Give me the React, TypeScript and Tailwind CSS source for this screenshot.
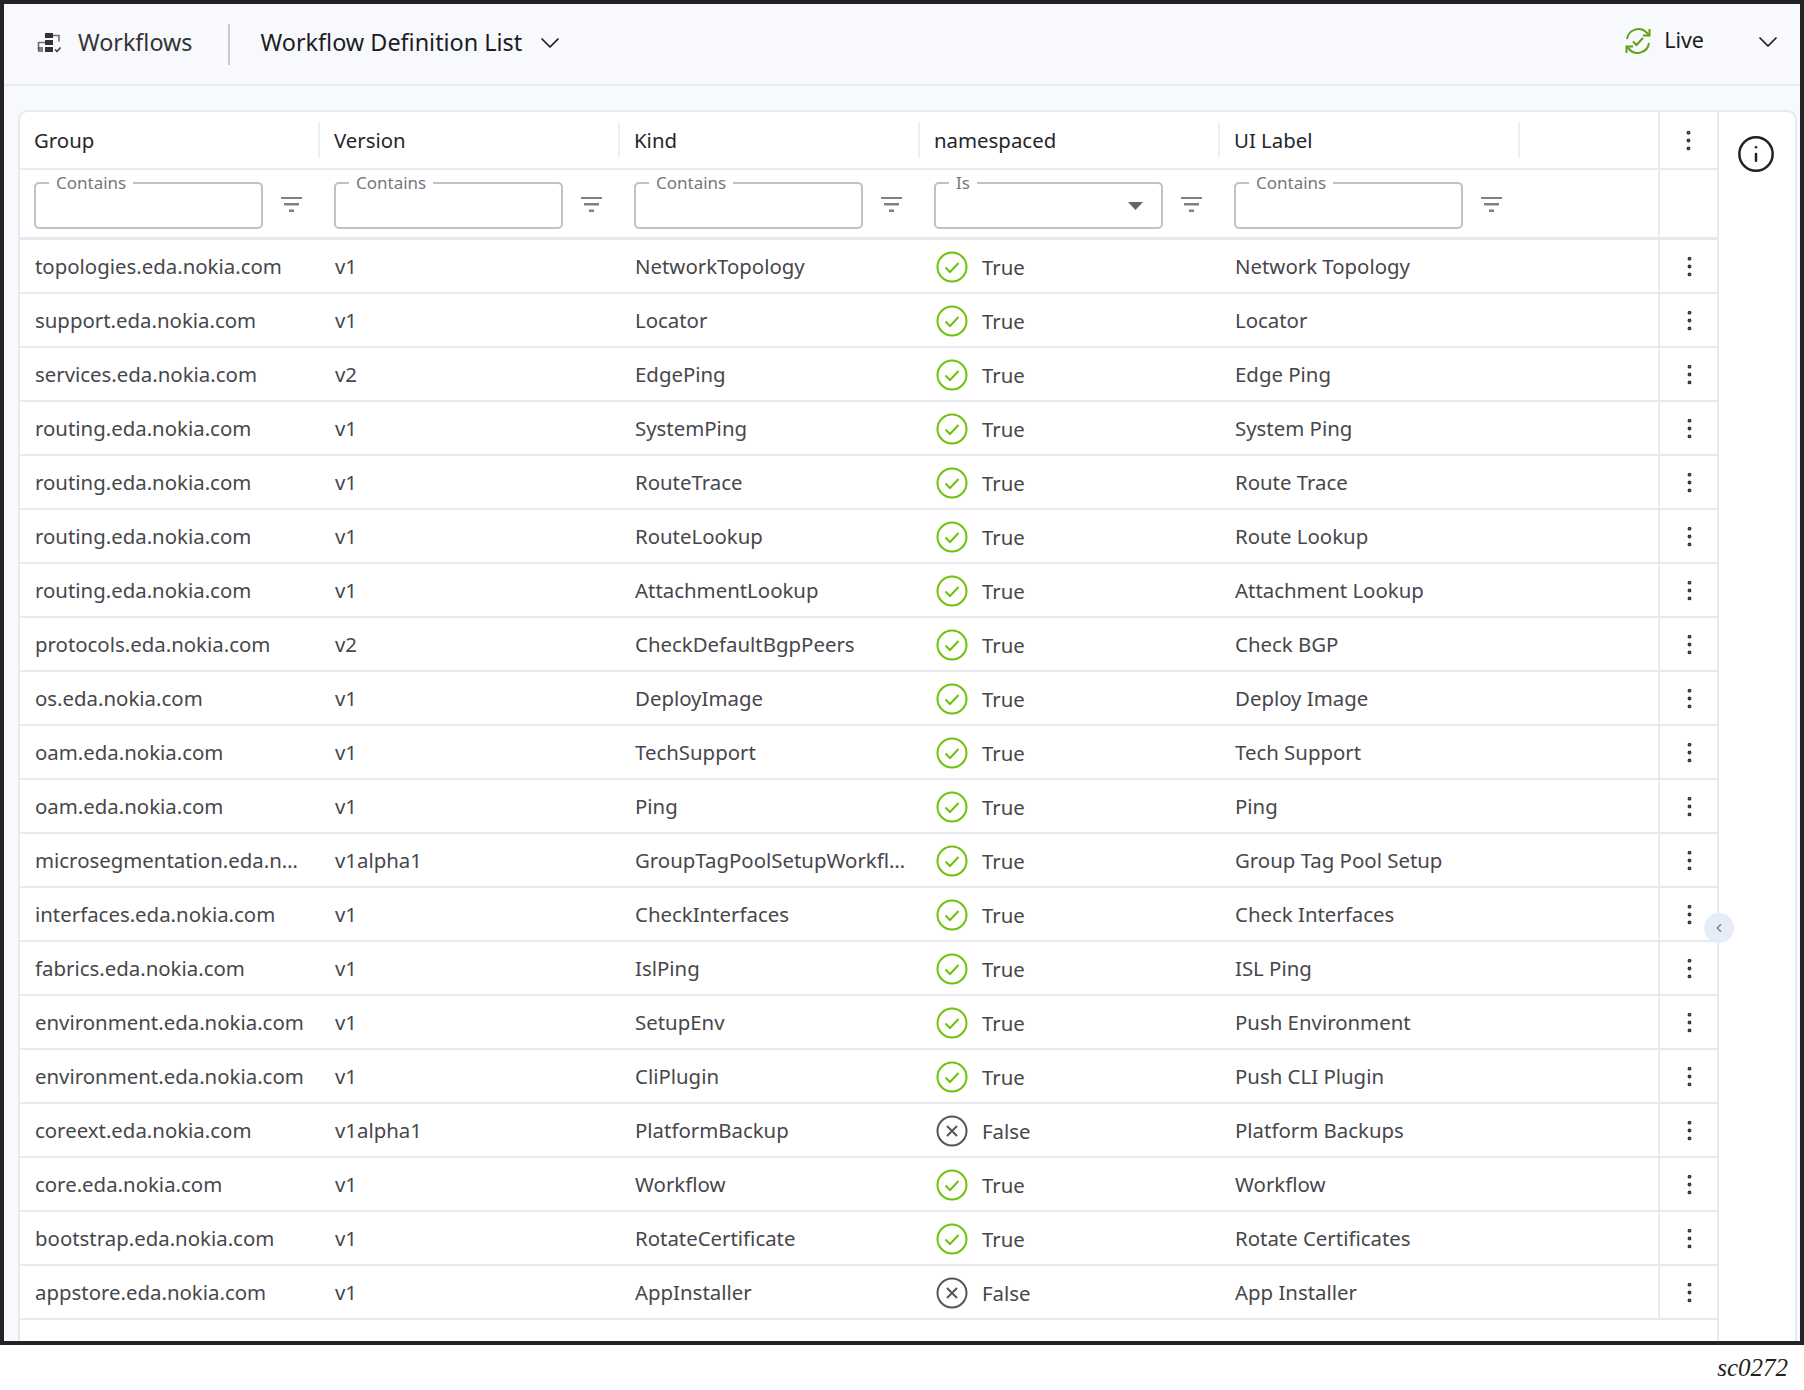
import { ChevronDown, ChevronLeft, EllipsisVertical, Info } from "lucide-react";

// Workflow definitions listed in the table, top to bottom.
const ROWS: [string, string, string, boolean, string][] = [
  ["topologies.eda.nokia.com", "v1", "NetworkTopology", true, "Network Topology"],
  ["support.eda.nokia.com", "v1", "Locator", true, "Locator"],
  ["services.eda.nokia.com", "v2", "EdgePing", true, "Edge Ping"],
  ["routing.eda.nokia.com", "v1", "SystemPing", true, "System Ping"],
  ["routing.eda.nokia.com", "v1", "RouteTrace", true, "Route Trace"],
  ["routing.eda.nokia.com", "v1", "RouteLookup", true, "Route Lookup"],
  ["routing.eda.nokia.com", "v1", "AttachmentLookup", true, "Attachment Lookup"],
  ["protocols.eda.nokia.com", "v2", "CheckDefaultBgpPeers", true, "Check BGP"],
  ["os.eda.nokia.com", "v1", "DeployImage", true, "Deploy Image"],
  ["oam.eda.nokia.com", "v1", "TechSupport", true, "Tech Support"],
  ["oam.eda.nokia.com", "v1", "Ping", true, "Ping"],
  ["microsegmentation.eda.nokia.com", "v1alpha1", "GroupTagPoolSetupWorkflow", true, "Group Tag Pool Setup"],
  ["interfaces.eda.nokia.com", "v1", "CheckInterfaces", true, "Check Interfaces"],
  ["fabrics.eda.nokia.com", "v1", "IslPing", true, "ISL Ping"],
  ["environment.eda.nokia.com", "v1", "SetupEnv", true, "Push Environment"],
  ["environment.eda.nokia.com", "v1", "CliPlugin", true, "Push CLI Plugin"],
  ["coreext.eda.nokia.com", "v1alpha1", "PlatformBackup", false, "Platform Backups"],
  ["core.eda.nokia.com", "v1", "Workflow", true, "Workflow"],
  ["bootstrap.eda.nokia.com", "v1", "RotateCertificate", true, "Rotate Certificates"],
  ["appstore.eda.nokia.com", "v1", "AppInstaller", false, "App Installer"],
];

const HEADERS = ["Group", "Version", "Kind", "namespaced", "UI Label"];
const FILTERS = ["Contains", "Contains", "Contains", "Is", "Contains"];

const COLUMNS = "grid grid-cols-[300px_300px_300px_300px_300px_138px_60px]";

function WorkflowIcon() {
  return (
    <svg width="26" height="24" viewBox="0 0 26 24" fill="none" className="-mt-[3px] text-[#333]">
      <rect x="9" y="2" width="8" height="5" fill="currentColor" />
      <rect x="9" y="9" width="8" height="5" fill="currentColor" />
      <rect x="9" y="16" width="8" height="5" fill="currentColor" />
      <path d="M17 4.500h6v6M9 11.500H2.500v8" stroke="currentColor" strokeWidth="1.6" opacity="0.7" />
      <rect x="2" y="16" width="5" height="5" fill="currentColor" opacity="0.6" />
      <path d="M19 18.500l2 2 3.500-4" stroke="currentColor" strokeWidth="1.500" />
    </svg>
  );
}

function LiveIcon() {
  return (
    <svg width="30" height="30" viewBox="0 0 30 30" fill="none" stroke="#5fa212" strokeWidth="2">
      <path d="M4 13A11.500 11.500 0 0 1 24 7l2.500 2.500" />
      <path d="M26.500 3v6.500H20" />
      <path d="M26 17A11.500 11.500 0 0 1 6 23l-2.500-2.500" />
      <path d="M3.500 27v-6.500H10" />
      <path d="M10 15.500l3.500 3.500 6.500-7" />
    </svg>
  );
}

function FilterIcon() {
  return (
    <svg width="21" height="18" viewBox="0 0 21 18" className="text-[#808080]">
      <rect x="0" y="1" width="21" height="2" fill="currentColor" />
      <rect x="3" y="7" width="15" height="2.500" fill="currentColor" />
      <rect x="8" y="13.500" width="5" height="2.500" fill="currentColor" />
    </svg>
  );
}

// Ring with a tick or a cross; the glyph is larger than lucide's circle icons.
function StatusIcon({ ok }: { ok: boolean }) {
  return (
    <svg
      width="32"
      height="32"
      viewBox="0 0 32 32"
      fill="none"
      stroke="currentColor"
      strokeWidth="2"
      className={ok ? "text-[#6fc10a]" : "text-[#55565a]"}
    >
      <circle cx="16" cy="16" r="14.500" />
      {ok ? <path d="M9.500 16.500l4.500 4.500 8.500-9" /> : <path d="M11 11l10 10M21 11L11 21" />}
    </svg>
  );
}

function FilterField({ label }: { label: string }) {
  return (
    <div className="flex items-center pl-[14px]">
      {/* notched outline: the legend breaks the top border */}
      <fieldset className="-mt-[5px] flex h-[55px] w-[229px] items-center justify-end rounded-[5px] border-2 border-[#c0c1c3] pl-[13px]">
        <legend className="px-[7px] text-[17px] leading-[18px] text-[#77777b]">{label}</legend>
        {label === "Is" && (
          <svg width="15" height="8" viewBox="0 0 15 8" className="mr-[18px] -mt-[6px]">
            <path d="M0 0h15l-7.500 8z" fill="#666" />
          </svg>
        )}
      </fieldset>
      <div className="ml-[18px] mt-[3px]">
        <FilterIcon />
      </div>
    </div>
  );
}

function Row({ row }: { row: (typeof ROWS)[number] }) {
  const [group, version, kind, namespaced, label] = row;
  const cell = "pl-[15px] pr-[13px] truncate";
  return (
    <div className={`${COLUMNS} h-[54px] items-center border-b-2 border-[#e6e9ee] text-[20.400px] text-[#47474b]`}>
      <div className={cell}>{group}</div>
      <div className={cell}>{version}</div>
      <div className={cell}>{kind}</div>
      <div className="flex items-center pl-[16px]">
        <div className="mt-[1px]">
          <StatusIcon ok={namespaced} />
        </div>
        <span className="ml-[14px] mt-[2px]">{namespaced ? "True" : "False"}</span>
      </div>
      <div className={cell}>{label}</div>
      <div />
      <div className="flex h-full items-center justify-center border-l-2 border-[#e9ebf0]">
        <EllipsisVertical size={27} strokeWidth={1.500} className="mt-[1px] text-[#333]" />
      </div>
    </div>
  );
}

export default function App() {
  return (
    <div className="h-[1390px] w-[1804px] bg-white font-['Noto_Sans',sans-serif]">
      <div className="flex h-[1345px] flex-col overflow-hidden border-4 border-[#232225] bg-[#f7f9fd]">
        <header className="flex h-[82px] shrink-0 items-center border-b-2 border-[#e6e9ef] pl-[32px] pr-[16px] text-[#1c1c22]">
          <WorkflowIcon />
          <span className="-mt-[3px] ml-[16px] text-[23.300px] text-[#333]">Workflows</span>
          <div className="ml-[36px] h-[41px] w-[2px] bg-[#c8cacd]" />
          <span className="-mt-[3px] ml-[30px] text-[23.400px]">Workflow Definition List</span>
          <ChevronDown size={32} strokeWidth={1.3} className="-mt-[3px] ml-[12px]" />
          <div className="-mt-[6px] ml-auto flex items-center">
            <LiveIcon />
            <span className="-mt-[1px] ml-[11px] text-[21.500px]">Live</span>
            <ChevronDown size={32} strokeWidth={1.3} className="ml-[48px] mt-[2px]" />
          </div>
        </header>

        <main className="min-h-0 flex-1 pl-[14px] pr-[3px] pt-[24px]">
          <div className="flex h-full rounded-t-[10px] border-2 border-b-0 border-[#e6e9ef] bg-white">
            <section className="relative w-[1699px] shrink-0 border-r-2 border-[#e6e9ef]">
              <div className={`${COLUMNS} h-[58px] items-center border-b-2 border-[#e9ebf0] text-[20.400px] text-[#26262c]`}>
                {HEADERS.map((title) => (
                  <div key={title} className="flex h-[36px] items-center border-r-2 border-[#eff0f4] pl-[14px]">
                    {title}
                  </div>
                ))}
                <div />
                <div className="flex h-full items-center justify-center border-l-2 border-[#e9ebf0]">
                  <EllipsisVertical size={27} strokeWidth={1.500} className="-ml-[2px] text-[#333]" />
                </div>
              </div>
              <div className={`${COLUMNS} h-[70px] items-center border-b-[3px] border-[#e6e9ee]`}>
                {FILTERS.map((label, i) => (
                  <FilterField key={i} label={label} />
                ))}
                <div />
                <div className="h-full border-l-2 border-[#e9ebf0]" />
              </div>
              {ROWS.map((row, i) => (
                <Row key={i} row={row} />
              ))}
              {/* side panel collapse toggle, sits over the panel edge */}
              <button
                type="button"
                className="absolute right-[-17px] top-[801px] flex h-[30px] w-[30px] items-center justify-center rounded-full bg-[#e6edf9] text-[#777]"
              >
                <ChevronLeft size={14} strokeWidth={2} />
              </button>
            </section>
            <aside className="flex flex-1 justify-center pt-[22px]">
              <Info size={40} strokeWidth={1.500} className="-ml-[2px] text-[#222]" />
            </aside>
          </div>
        </main>
      </div>
      <p className="pr-[16px] pt-[4px] text-right font-['Liberation_Serif',serif] text-[25px] italic text-[#222]">sc0272</p>
    </div>
  );
}
